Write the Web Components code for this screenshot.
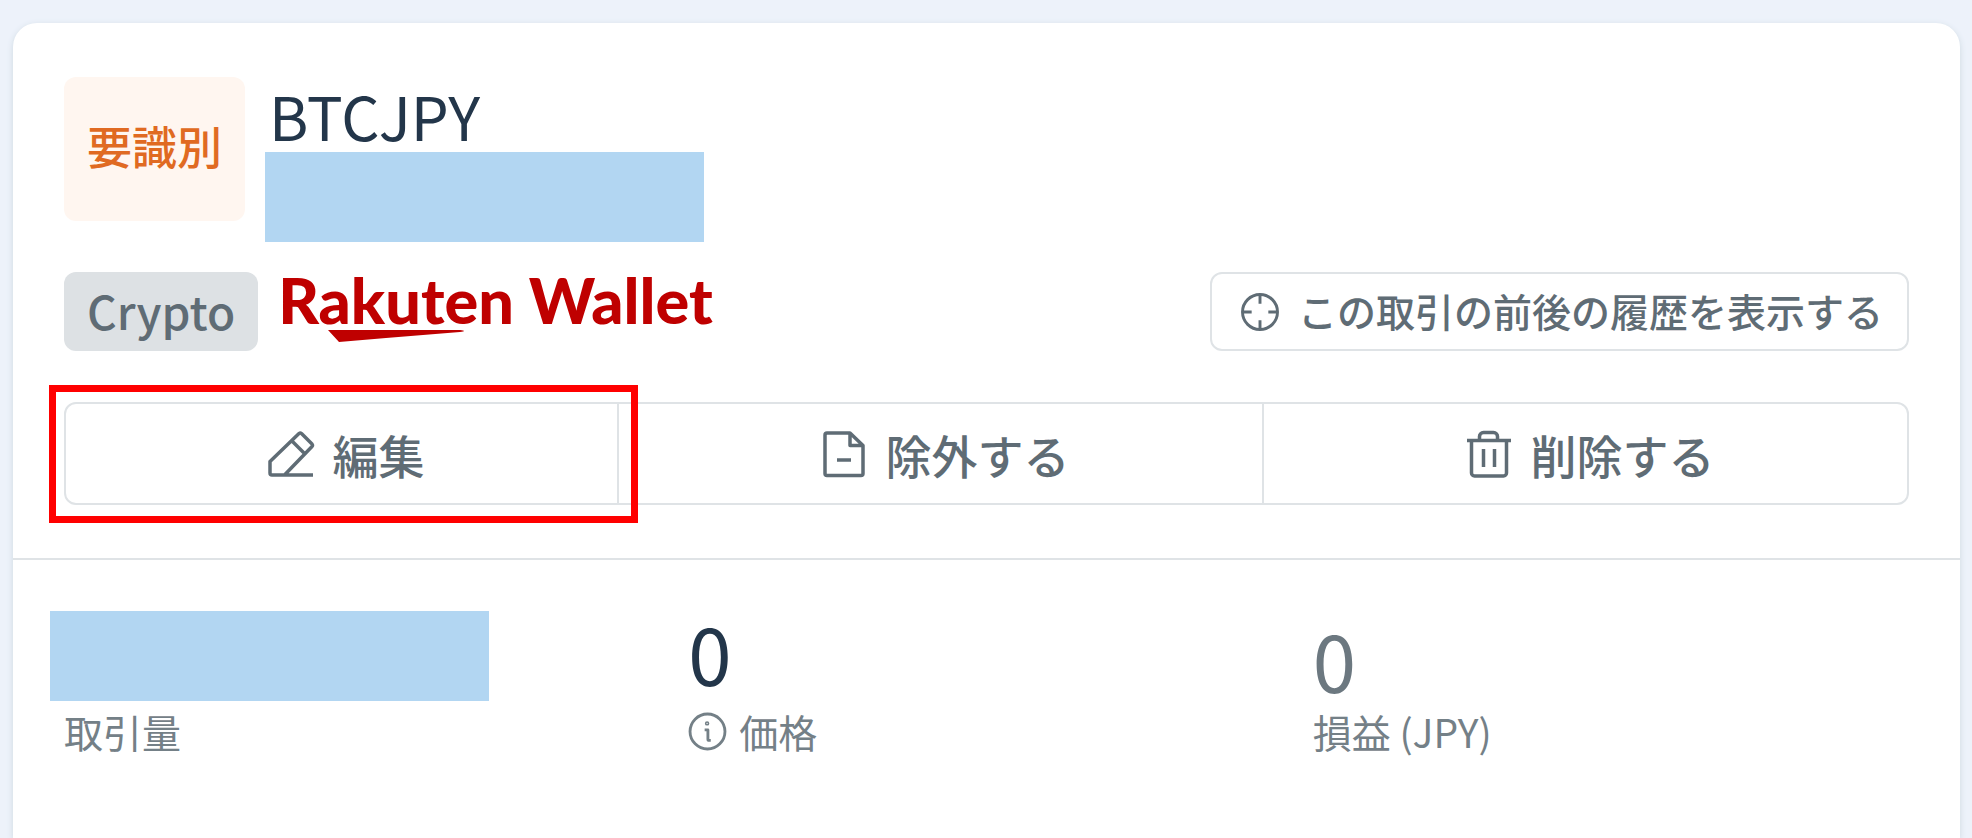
<!DOCTYPE html>
<html lang="ja">
<head>
<meta charset="utf-8">
<meta name="viewport" content="width=device-width, initial-scale=1">
<title>BTCJPY</title>
<style>
	body {
		margin: 0;
		background-color: #edf2fa;
		color: #23364a;
		font-family: 'Noto Sans CJK JP', sans-serif;
	}
</style>
</head>
<body>
<trade-card>
	<trade-header slot="header" status="要識別" name="BTCJPY"></trade-header>
	<trade-source slot="header" kind="Crypto">
		<wallet-logo></wallet-logo>
		<icon-button slot="action" icon="target" size="small">この取引の前後の履歴を表示する</icon-button>
	</trade-source>
	<button-group slot="header">
		<icon-button icon="edit" marked>編集</icon-button>
		<icon-button icon="file">除外する</icon-button>
		<icon-button icon="trash">削除する</icon-button>
	</button-group>
	<trade-stat label="取引量"><masked-value class="flush"></masked-value></trade-stat>
	<trade-stat label="価格" info>0</trade-stat>
	<trade-stat label="損益 (JPY)" muted>0</trade-stat>
</trade-card>

<script>
const icons = {
	target: `<circle cx="24" cy="24" r="21"/><path d="M24 3v11M24 34v11M3 24h11M34 24h11"/>`,
	edit: `<path d="M46 45H5a2 2 0 0 1-2-2V31.500L32 3.500a2 2 0 0 1 2.500 0L45 14a2 2 0 0 1 0 2.500L17.500 45M24.500 10.500L38 24"/>`,
	file: `<path d="M30 3H7a2 2 0 0 0-2 2v38.500a2 2 0 0 0 2 2h34a2 2 0 0 0 2-2V15.500zM30 3v12.500h13M17 30h14"/>`,
	trash: `<path d="M2 10.500h44M6.500 10.500v32.500a3 3 0 0 0 3 3h29a3 3 0 0 0 3-3v-32.500M14.500 10.500V6.500a4 4 0 0 1 4-4h10a4 4 0 0 1 4 4v4M18.500 19v18M29.500 19v18"/>`,
	info: `<circle cx="24" cy="24" r="21.500"/><path d="M20.500 22h4v11.500q0 1.500 1.500 1.500h2"/><circle cx="23.500" cy="14" r="1"/>`
};

class LineIcon extends HTMLElement {
	constructor() {
		super();
		this.root = this.attachShadow({ mode: 'open' });
	}
	connectedCallback() {
		this.root.innerHTML = `
			<style>
				:host {
					display: block;
					flex: none;
					width: 48px;
					height: 48px;
				}
				svg {
					display: block;
					width: 100%;
					height: 100%;
					fill: none;
					stroke: currentColor;
					stroke-width: 3.500;
					stroke-linejoin: round;
				}
			</style>
			<svg viewBox="0 0 48 48" aria-hidden="true">${icons[this.getAttribute('name')]}</svg>
		`;
	}
}

class IconButton extends HTMLElement {
	constructor() {
		super();
		this.root = this.attachShadow({ mode: 'open' });
	}
	connectedCallback() {
		this.root.innerHTML = `
			<style>
				:host {
					display: block;
					position: relative;
				}
				button {
					display: flex;
					align-items: center;
					justify-content: center;
					gap: 18px;
					box-sizing: border-box;
					width: 100%;
					height: 99px;
					padding: 0 0 0 8px;
					border: none;
					background-color: transparent;
					color: #5f6c75;
					font: 500 46px/60px 'Noto Sans CJK JP', sans-serif;
					white-space: nowrap;
					cursor: pointer;
				}
				button:hover {
					background-color: #f6f8fa;
				}
				:host([size="small"]) button {
					height: 79px;
					padding: 0 24px 0 28px;
					border: 2px solid #dfe3e6;
					border-radius: 12px;
					font-size: 39px;
				}
				:host([size="small"]) line-icon {
					width: 40px;
					height: 40px;
				}
				:host([size="small"]) span {
					padding-bottom: 4px;
				}
				:host([marked])::after {
					content: '';
					position: absolute;
					inset: -19px -21px -20px -17px;
					border: 7px solid #f00;
					pointer-events: none;
					z-index: 1;
				}
			</style>
			<button type="button">
				<line-icon name="${this.getAttribute('icon')}"></line-icon>
				<span><slot></slot></span>
			</button>
		`;
	}
}

class ButtonGroup extends HTMLElement {
	constructor() {
		super();
		this.root = this.attachShadow({ mode: 'open' });
		this.root.innerHTML = `
			<style>
				:host {
					display: flex;
					border: 2px solid #dfe3e6;
					border-radius: 12px;
				}
				::slotted(*) {
					flex: 1 1 auto;
				}
				::slotted(:not(:first-child)) {
					border-left: 2px solid #dfe3e6;
				}
			</style>
			<slot></slot>
		`;
	}
}

class MaskedValue extends HTMLElement {
	constructor() {
		super();
		this.root = this.attachShadow({ mode: 'open' });
		this.root.innerHTML = `
			<style>
				:host {
					display: block;
					width: 439px;
					height: 90px;
					background-color: #b2d6f2;
				}
				:host(.flush) {
					margin-left: -14px;
				}
			</style>
		`;
	}
}

class WalletLogo extends HTMLElement {
	constructor() {
		super();
		this.root = this.attachShadow({ mode: 'open' });
		this.root.innerHTML = `
			<style>
				:host {
					display: block;
					color: #bf0000;
					font: 900 63px/56px Lato, sans-serif;
					white-space: nowrap;
				}
				svg {
					display: block;
					width: 138px;
					height: 12px;
					margin: 2px 0 0 50px;
					fill: currentColor;
				}
			</style>
			Rakuten Wallet
			<svg viewBox="0 0 138 12" aria-hidden="true"><path d="M0 0H132Q140 1 132 2L58 8L11 12z"/></svg>
		`;
	}
}

class TradeHeader extends HTMLElement {
	constructor() {
		super();
		this.root = this.attachShadow({ mode: 'open' });
	}
	connectedCallback() {
		this.root.innerHTML = `
			<style>
				:host {
					display: flex;
					align-items: flex-start;
					gap: 20px;
				}
				.status {
					padding: 39px 23px 45px;
					border-radius: 12px;
					background-color: #fff6f0;
					color: #e06a22;
					font-size: 45px;
					font-weight: 500;
					line-height: 60px;
				}
				h1 {
					margin: 0;
					padding-left: 4px;
					font-size: 60px;
					font-weight: 400;
					line-height: 75px;
				}
			</style>
			<div class="status">${this.getAttribute('status')}</div>
			<div>
				<h1>${this.getAttribute('name')}</h1>
				<masked-value></masked-value>
			</div>
		`;
	}
}

class TradeSource extends HTMLElement {
	constructor() {
		super();
		this.root = this.attachShadow({ mode: 'open' });
	}
	connectedCallback() {
		this.root.innerHTML = `
			<style>
				:host {
					display: flex;
					align-items: flex-start;
					gap: 20px;
					margin: 30px 0 51px;
				}
				.kind {
					padding: 0 23px 3px;
					border-radius: 12px;
					background-color: #dde1e4;
					color: #5f6c75;
					font-size: 46px;
					font-weight: 500;
					line-height: 76px;
				}
				.action {
					margin-left: auto;
				}
			</style>
			<div class="kind">${this.getAttribute('kind')}</div>
			<slot></slot>
			<div class="action"><slot name="action"></slot></div>
		`;
	}
}

class TradeStat extends HTMLElement {
	constructor() {
		super();
		this.root = this.attachShadow({ mode: 'open' });
	}
	connectedCallback() {
		this.root.innerHTML = `
			<style>
				:host {
					display: flex;
					flex-direction: column;
					justify-content: flex-end;
				}
				.value {
					margin-bottom: 8px;
					font-size: 78px;
					line-height: 82px;
				}
				:host([muted]) .value {
					margin-bottom: 1px;
					color: #6c7880;
				}
				:host(:first-of-type) .value {
					margin-bottom: 0;
				}
				.label {
					display: flex;
					align-items: center;
					gap: 12px;
					color: #748087;
					font-size: 39px;
					line-height: 60px;
				}
				line-icon {
					width: 39px;
					height: 39px;
				}
			</style>
			<div class="value"><slot></slot></div>
			<div class="label">
				${this.hasAttribute('info') ? '<line-icon name="info"></line-icon>' : ''}
				<span>${this.getAttribute('label')}</span>
			</div>
		`;
	}
}

class TradeCard extends HTMLElement {
	constructor() {
		super();
		this.root = this.attachShadow({ mode: 'open' });
		this.root.innerHTML = `
			<style>
				:host {
					display: block;
					box-sizing: border-box;
					min-height: 100vh;
					padding: 23px 12px 0 13px;
				}
				article {
					box-sizing: border-box;
					min-height: calc(100vh - 23px);
					border-radius: 24px 24px 0 0;
					background-color: white;
					box-shadow: 0 2px 6px #ccd8e0;
				}
				header {
					padding: 54px 51px 53px;
					border-bottom: 2px solid #dfe3e6;
				}
				section {
					display: grid;
					grid-template-columns: repeat(3, 1fr);
					gap: 28px;
					padding: 51px 51px 0;
				}
			</style>
			<article>
				<header><slot name="header"></slot></header>
				<section><slot></slot></section>
			</article>
		`;
	}
}

customElements.define('line-icon', LineIcon);
customElements.define('icon-button', IconButton);
customElements.define('button-group', ButtonGroup);
customElements.define('masked-value', MaskedValue);
customElements.define('wallet-logo', WalletLogo);
customElements.define('trade-header', TradeHeader);
customElements.define('trade-source', TradeSource);
customElements.define('trade-stat', TradeStat);
customElements.define('trade-card', TradeCard);
</script>
</body>
</html>
